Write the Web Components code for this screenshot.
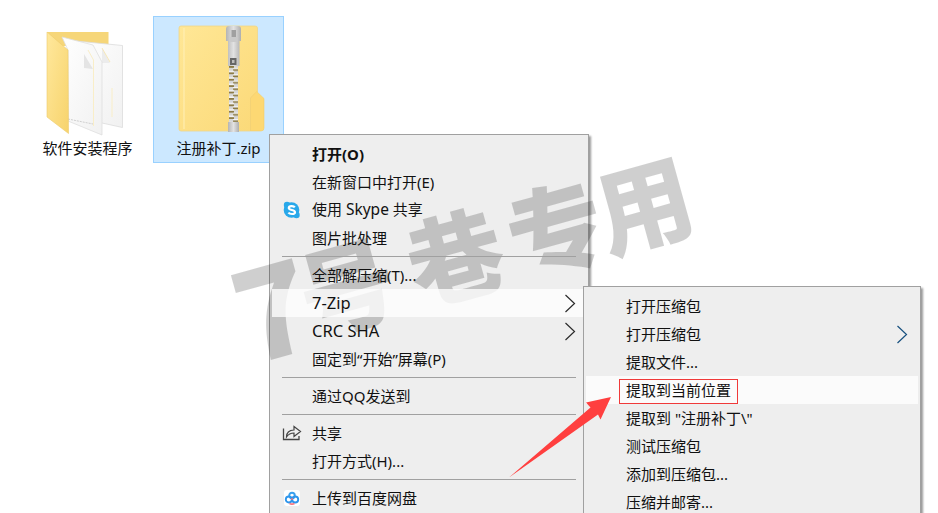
<!DOCTYPE html>
<html lang="zh">
<head>
<meta charset="utf-8">
<title>7-Zip menu</title>
<style>
  html, body { margin: 0; background: #fff; }
  body { font-family: "Noto Sans", "Noto Sans CJK SC", sans-serif; font-size: 15px; color: #111; }
  .wide { font-size: 16.500px; }
  .mid { font-size: 15.500px; }
</style>
</head>
<body>
<desk-top>
  <desk-icon>
    <svg slot="icon" width="131" height="120" viewBox="22 16 131 120">
      <defs>
        <linearGradient id="flap" x1="0" y1="0" x2="1" y2="1"><stop offset="0" stop-color="#ffe89c"/><stop offset="1" stop-color="#f7d36c"/></linearGradient>
        <linearGradient id="paper" x1="0" y1="0" x2="1" y2="1"><stop offset="0" stop-color="#fff"/><stop offset="1" stop-color="#f1f1f1"/></linearGradient>
      </defs>
      <path d="M47 32H108.500V46H60Z" fill="#f6d679"/>
      <path d="M76 41L122.500 45.500V127.500L102 123L76 120Z" fill="url(#paper)" stroke="#dcdcdc" stroke-width=".8"/>
      <path d="M102 48L110 63H102Z" fill="#ececec"/>
      <path d="M102 48L110 62" fill="none" stroke="#f6e3a8" stroke-width=".8"/>
      <path d="M112 88V117" stroke="#f9eec8"/>
      <path d="M62 37L93 45L102 62V135L68 121V50Z" fill="url(#paper)" stroke="#dedede" stroke-width=".8"/>
      <path d="M84 54L93 69L84 68Z" fill="#e4e4e4"/>
      <path d="M88 50L93.500 60V126" fill="none" stroke="#f9eec8"/>
      <path d="M68 119L93 124" stroke="#cfcfcf" stroke-dasharray="2 1"/>
      <path d="M47 32L68 50L68.500 133.500L47 117Z" fill="url(#flap)" stroke="#eccb6b" stroke-width=".6"/>
    </svg>
    软件安装程序
  </desk-icon>
  <desk-icon selected>
    <svg slot="icon" width="131" height="120" viewBox="153 16 131 120">
      <defs>
        <linearGradient id="body" x1="0" y1="0" x2="1" y2="1"><stop offset="0" stop-color="#ffe796"/><stop offset="1" stop-color="#fbd978"/></linearGradient>
        <linearGradient id="slider" x1="0" y1="0" x2="1" y2="0"><stop offset="0" stop-color="#b4b4b4"/><stop offset=".5" stop-color="#e2e2e2"/><stop offset="1" stop-color="#aeaeae"/></linearGradient>
        <pattern id="teeth" width="9" height="6.400" patternUnits="userSpaceOnUse" x="229" y="66">
          <rect width="9" height="6.400" fill="#d6d6d6"/>
          <rect x="0" y="0" width="5" height="1.800" fill="#8b7a45"/>
          <rect x="4" y="1.800" width="5" height="1.500" fill="#f4f4f4"/>
          <rect x="4" y="3.200" width="5" height="1.600" fill="#8b7a45"/>
          <rect x="0" y="4.800" width="5" height="1.600" fill="#f4f4f4"/>
        </pattern>
      </defs>
      <path d="M181 26H255Q257.500 26 257.500 28V92L250.500 98V131H181Q179 131 179 129V28Q179 26 181 26Z" fill="url(#body)" stroke="#efd58a" stroke-width=".8"/>
      <path d="M184 28V129" stroke="#fff0b8" stroke-width="1"/>
      <path d="M250.500 98L256.700 91.500L264 98.500V128Q264 131 261 131H250.500Z" fill="#fdd873" stroke="#f3cf6c" stroke-width=".6"/>
      <rect x="229" y="66" width="9" height="56" fill="url(#teeth)"/>
      <path d="M226 29Q226 26 229 26H238Q241 26 241 29V41H239.500V66H228V41H226Z" fill="url(#slider)"/>
      <rect x="231.500" y="30" width="4.500" height="9" fill="#a0a0a0"/>
      <rect x="229.500" y="37" width="8" height="5" fill="#cacaca"/>
      <rect x="230" y="58" width="6.500" height="7" fill="#666"/>
      <rect x="232" y="60" width="2.500" height="3" fill="#bcbcbc"/>
      <rect x="228" y="122" width="11" height="10" fill="url(#slider)"/>
    </svg>
    注册补丁.zip
  </desk-icon>

  <ctx-menu slot="over" style="left:269px;top:134px;width:320px">
    <menu-row bold>打开(O)</menu-row>
    <menu-row>在新窗口中打开(E)</menu-row>
    <menu-row>
      <svg slot="icon" width="18" height="18" viewBox="0 0 18 18">
        <circle cx="8.500" cy="9" r="7.800" fill="#28a8ea"/>
        <circle cx="4" cy="4" r="3.200" fill="#28a8ea"/>
        <circle cx="13.500" cy="14" r="3.200" fill="#28a8ea"/>
        <path d="M11.800 6.300C10.800 4.800 5.800 4.600 5.800 7C5.800 9.600 12 8.400 12 11.200C12 13.600 6.800 13.400 5.400 11.600" fill="none" stroke="#fff" stroke-width="2.200"/>
      </svg>
      使用 <span class="mid">Skype</span> 共享
    </menu-row>
    <menu-row>图片批处理</menu-row>
    <menu-sep></menu-sep>
    <menu-row>全部解压缩(T)...</menu-row>
    <menu-row hot arrow><span class="wide">7-Zip</span></menu-row>
    <menu-row arrow><span class="wide">CRC SHA</span></menu-row>
    <menu-row>固定到“开始”屏幕(P)</menu-row>
    <menu-sep></menu-sep>
    <menu-row>通过QQ发送到</menu-row>
    <menu-sep></menu-sep>
    <menu-row>
      <svg slot="icon" width="20" height="16" viewBox="0 0 20 16">
        <path d="M1.500 3.500V14.500H17V11" fill="none" stroke="#444" stroke-width="1.300"/>
        <path d="M4.500 12C4.500 7.500 7.500 5 12 5V1.500L18.500 6.500L12 11.500V8C9 8 6.500 9 4.500 12Z" fill="none" stroke="#444" stroke-width="1.200"/>
      </svg>
      共享
    </menu-row>
    <menu-row>打开方式(H)...</menu-row>
    <menu-sep></menu-sep>
    <menu-row>
      <svg slot="icon" width="16" height="16" viewBox="0 0 16 16">
        <rect width="16" height="16" rx="3" fill="#fff"/>
        <circle cx="8" cy="5.500" r="2.800" fill="none" stroke="#3aa0ee" stroke-width="1.900"/>
        <circle cx="4.800" cy="9.500" r="3" fill="none" stroke="#2f96ec" stroke-width="1.900"/>
        <circle cx="11.200" cy="9.500" r="3" fill="none" stroke="#2f96ec" stroke-width="1.900"/>
        <path d="M5.500 13.500Q8 14.800 10.500 13.500" fill="none" stroke="#f6737f" stroke-width="1.600"/>
        <path d="M7 9H9" stroke="#f6737f" stroke-width="1.600"/>
      </svg>
      上传到百度网盘
    </menu-row>
  </ctx-menu>

  <water-mark slot="over"></water-mark>

  <ctx-menu slot="over" sub style="left:583px;top:286px;width:338px">
    <menu-row>打开压缩包</menu-row>
    <menu-row arrow blue>打开压缩包</menu-row>
    <menu-row>提取文件...</menu-row>
    <menu-row hot>提取到当前位置</menu-row>
    <menu-row>提取到 "注册补丁\"</menu-row>
    <menu-row>测试压缩包</menu-row>
    <menu-row>添加到压缩包...</menu-row>
    <menu-row>压缩并邮寄...</menu-row>
  </ctx-menu>

  <mark-up slot="over"></mark-up>
</desk-top>

<script>
// the desktop: tiles flow in a row, the menus lie over them
customElements.define('desk-top', class extends HTMLElement {
  constructor () {
    super()
    this.attachShadow({ mode: 'open' }).innerHTML = `
      <style>
        :host { display: block; position: relative; width: 938px; height: 513px; overflow: hidden; }
        .tiles { display: flex; padding: 16px 0 0 22px; }
      </style>
      <div class="tiles"><slot></slot></div>
      <slot name="over"></slot>`
  }
})

customElements.define('desk-icon', class extends HTMLElement {
  constructor () {
    super()
    this.attachShadow({ mode: 'open' }).innerHTML = `
      <style>
        :host { display: flex; flex-direction: column; align-items: center; box-sizing: border-box; width: 131px; height: 147px; border: 1px solid transparent; }
        :host([selected]) { background: #cce8ff; border-color: #99d1ff; }
        .pic { display: block; height: 119px; margin: -1px -1px 0; }
        .label { line-height: 27px; white-space: nowrap; }
      </style>
      <div class="pic"><slot name="icon"></slot></div>
      <div class="label"><slot></slot></div>`
  }
})

customElements.define('ctx-menu', class extends HTMLElement {
  constructor () {
    super()
    this.attachShadow({ mode: 'open' }).innerHTML = `
      <style>
        :host { display: block; position: absolute; box-sizing: border-box; height: 300px; padding: 5px 2px; background: #eee; border: 1px solid #a0a0a0; box-shadow: 2px 2px 2px rgba(0,0,0,.4); }
        :host([sub]) { z-index: 3; }
        :host(:not([sub])) { height: 400px; }
      </style>
      <slot></slot>`
  }
})

customElements.define('menu-row', class extends HTMLElement {
  constructor () {
    super()
    this.attachShadow({ mode: 'open' }).innerHTML = `
      <style>
        :host { display: flex; align-items: center; position: relative; z-index: 2; height: 28px; padding-right: 10px; white-space: nowrap; }
        :host([bold]) { font-weight: 700; }
        :host([hot]) { background: rgba(255,255,255,.78); }
        .ico { display: flex; justify-content: center; align-items: center; box-sizing: border-box; width: 40px; padding: 0 10px; flex: none; }
        .txt { margin-top: -2px; }
        .arrow { display: none; margin-left: auto; }
        :host([arrow]) .arrow { display: block; }
        .arrow path { stroke: #2b2b2b; }
        :host([blue]) .arrow path { stroke: #17507f; }
      </style>
      <span class="ico"><slot name="icon"></slot></span>
      <span class="txt"><slot></slot></span>
      <svg class="arrow" width="11" height="19" viewBox="0 0 11 19"><path d="M.500 1L9.500 9.500L.500 18" fill="none" stroke-width="1.200"/></svg>`
  }
})

customElements.define('menu-sep', class extends HTMLElement {
  constructor () {
    super()
    this.attachShadow({ mode: 'open' }).innerHTML = `
      <style>
        :host { display: block; position: relative; z-index: 2; height: 1px; margin: 4px 10px; background: #a0a0a0; }
      </style>`
  }
})

// rotated watermark, it lies between the menu background and the rows
customElements.define('water-mark', class extends HTMLElement {
  constructor () {
    super()
    this.attachShadow({ mode: 'open' }).innerHTML = `
      <style>
        :host { display: flex; align-items: center; position: absolute; left: 235px; top: 264px; height: 100px; z-index: 1; transform-origin: 0 50%; transform: rotate(-15.500deg); color: rgba(0,0,0,.19); font: 900 96px/100px "Noto Sans CJK SC", sans-serif; white-space: nowrap; }
        .seven { font-size: 124px; margin-right: -8px; }
        .m16 { margin-right: 16px; }
        .m8 { margin-right: 8px; }
        .m0 { margin-right: -4px; }
      </style>
      <span class="seven">7</span><span class="m16">号</span><span class="m8">巷</span><span class="m0">专</span><span>用</span>`
  }
})

// red box and arrow drawn on the screenshot
customElements.define('mark-up', class extends HTMLElement {
  constructor () {
    super()
    this.attachShadow({ mode: 'open' }).innerHTML = `
      <style>
        :host { display: block; position: absolute; inset: 0; z-index: 5; pointer-events: none; }
        svg { display: block; }
      </style>
      <svg width="938" height="513" viewBox="0 0 938 513">
        <rect x="619.500" y="379.500" width="118" height="24" fill="none" stroke="#f03a3a"/>
        <path d="M611 397L586 402.500L590.500 407.500L509 477.500L598 414.500L600.500 419.500Z" fill="#ff3f3f"/>
      </svg>`
  }
})
</script>
</body>
</html>
